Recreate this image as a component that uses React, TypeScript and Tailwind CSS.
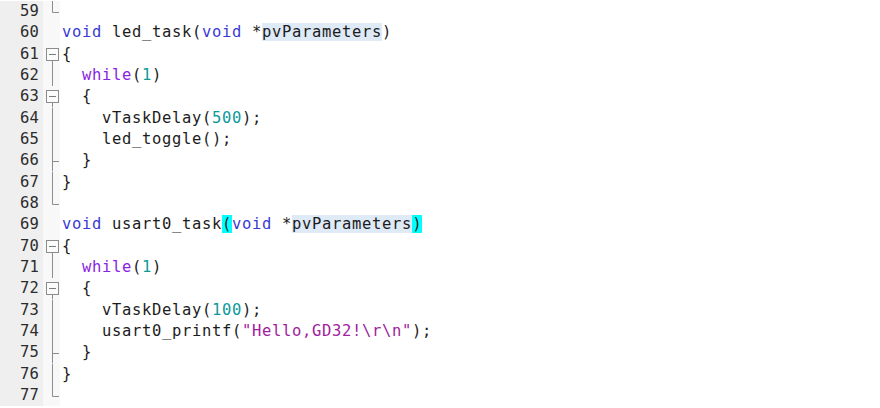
import React from 'react';

type Tok = [string, string?];
type Fold = 'none' | 'end' | 'box' | 'line' | 'tick';

// colour classes for tokens
const kw = 'text-[#3a3ad4]';
const flow = 'text-[#8a23e4]';
const num = 'text-[#0b9a9a]';
const str = 'text-[#a0229c]';
const hl = 'bg-[#dfeaf7]';
const brace = 'bg-[#00ffff]';

const lines: { n: number; fold: Fold; toks: Tok[] }[] = [
  { n: 59, fold: 'end', toks: [] },
  { n: 60, fold: 'none', toks: [['void', kw], [' led_task('], ['void', kw], [' *'], ['pvParameters', hl], [')']] },
  { n: 61, fold: 'box', toks: [['{']] },
  { n: 62, fold: 'line', toks: [['  '], ['while', flow], ['('], ['1', num], [')']] },
  { n: 63, fold: 'box', toks: [['  {']] },
  { n: 64, fold: 'line', toks: [['    vTaskDelay('], ['500', num], [');']] },
  { n: 65, fold: 'line', toks: [['    led_toggle();']] },
  { n: 66, fold: 'tick', toks: [['  }']] },
  { n: 67, fold: 'line', toks: [['}']] },
  { n: 68, fold: 'end', toks: [] },
  { n: 69, fold: 'none', toks: [['void', kw], [' usart0_task'], ['(', brace], ['void', kw], [' *'], ['pvParameters', hl], [')', brace]] },
  { n: 70, fold: 'box', toks: [['{']] },
  { n: 71, fold: 'line', toks: [['  '], ['while', flow], ['('], ['1', num], [')']] },
  { n: 72, fold: 'box', toks: [['  {']] },
  { n: 73, fold: 'line', toks: [['    vTaskDelay('], ['100', num], [');']] },
  { n: 74, fold: 'line', toks: [['    usart0_printf('], ['"Hello,GD32!\\r\\n"', str], [');']] },
  { n: 75, fold: 'tick', toks: [['  }']] },
  { n: 76, fold: 'line', toks: [['}']] },
  { n: 77, fold: 'end', toks: [] },
];

const FoldMark = ({ kind }: { kind: Fold }) => {
  const c = '#8c8c8c';
  return (
    <svg width="17" height="21.33" viewBox="0 0 17 21.33" className="block">
      {kind === 'line' && <line x1="9.5" y1="0" x2="9.5" y2="21.33" stroke={c} strokeWidth="1" />}
      {kind === 'tick' && (
        <>
          <line x1="9.5" y1="0" x2="9.5" y2="21.33" stroke={c} strokeWidth="1" />
          <line x1="9.5" y1="11.5" x2="16" y2="11.5" stroke={c} strokeWidth="1" />
        </>
      )}
      {kind === 'end' && (
        <>
          <line x1="9.5" y1="0" x2="9.5" y2="11.5" stroke={c} strokeWidth="1" />
          <line x1="9.5" y1="11.5" x2="16" y2="11.5" stroke={c} strokeWidth="1" />
        </>
      )}
      {kind === 'box' && (
        <>
          <line x1="9.5" y1="17" x2="9.5" y2="21.33" stroke={c} strokeWidth="1" />
          <rect x="3.5" y="4.5" width="12" height="12" fill="#fbfbfb" stroke={c} strokeWidth="1" />
          <line x1="6" y1="10.5" x2="13" y2="10.5" stroke="#7a7a7a" strokeWidth="1" />
        </>
      )}
    </svg>
  );
};

export default function App() {
  return (
    <div className="w-[880px] h-[408px] bg-white overflow-hidden font-['DejaVu_Sans_Mono','Liberation_Mono',monospace] text-[15.5px] leading-[21.33px]">
      <div className="flex flex-col pt-px">
        {lines.map((l) => (
          <div key={l.n} className="flex h-[21.33px]">
            <div className="w-[43px] bg-[#efefef] text-right pr-[4px] text-[#2c2c2c] tracking-[0.2px]">{l.n}</div>
            <div className="w-[17px] bg-[#f8f8f8]">
              <FoldMark kind={l.fold} />
            </div>
            <div className="pl-[2px] whitespace-pre text-[#1c1c1c] tracking-[0.67px]">
              {l.toks.map((t, i) => (
                <span key={i} className={t[1] ?? ''}>{t[0]}</span>
              ))}
            </div>
          </div>
        ))}
      </div>
    </div>
  );
}
